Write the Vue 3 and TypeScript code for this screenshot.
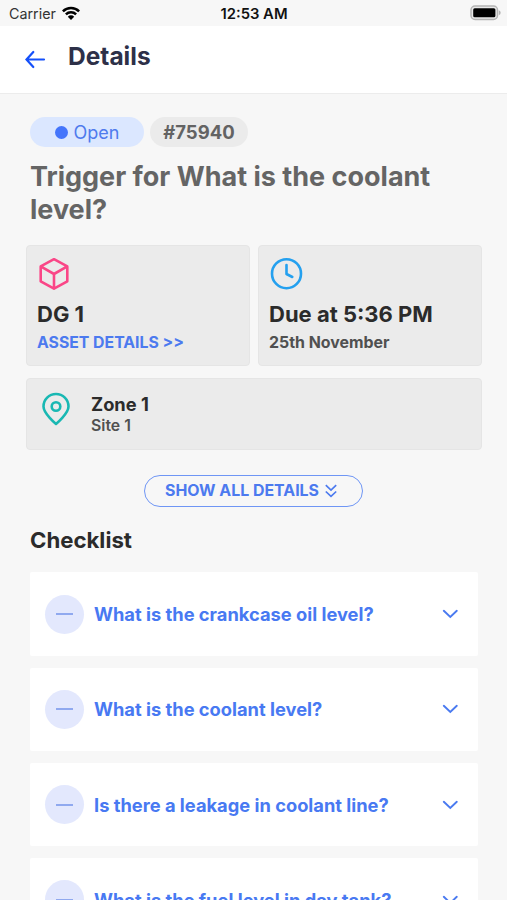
<script setup lang="ts">
interface ChecklistItem {
  id: number
  question: string
}

const ticket = {
  status: 'Open',
  number: '#75940',
  title: 'Trigger for What is the coolant level?',
  asset: 'DG 1',
  due: 'Due at 5:36 PM',
  date: '25th November',
  zone: 'Zone 1',
  site: 'Site 1',
}

const checklist: ChecklistItem[] = [
  { id: 1, question: 'What is the crankcase oil level?' },
  { id: 2, question: 'What is the coolant level?' },
  { id: 3, question: 'Is there a leakage in coolant line?' },
  { id: 4, question: 'What is the fuel level in day tank?' },
]
</script>

<template>
  <div class="screen">
    <div class="status-bar">
      <div class="carrier">
        <span class="carrier-name">Carrier</span>
        <svg class="wifi" viewBox="0 0 18 14" width="18" height="14">
          <g fill="none" stroke="#000" stroke-width="2.5">
            <path d="M0.9 5.3A11.4 11.4 0 0 1 17.1 5.3" />
            <path d="M3.9 8.4A7.2 7.2 0 0 1 14.1 8.4" />
          </g>
          <path d="M9 14L5.8 10.7A4.5 4.5 0 0 1 12.2 10.7Z" />
        </svg>
      </div>
      <span class="time">12:53 AM</span>
      <svg class="battery" viewBox="0 0 32 16" width="32" height="16">
        <rect x="2" y="1" width="26.500" height="13.400" rx="4" fill="#e8e8e8" stroke="#b4b4b4" stroke-width="1.5" />
        <rect x="4.2" y="3.3" width="22.2" height="8.900" rx="1.500" />
        <path d="M29.8 5.2Q31.7 6 31.7 7.7T29.8 10.2Z" fill="#b4b4b4" />
      </svg>
    </div>

    <header class="header">
      <svg class="back" viewBox="0 0 22 20" width="22" height="20">
        <path d="M20 9.500H2.800M9.300 2L2.500 9.500L9.300 17" />
      </svg>
      <h1>Details</h1>
    </header>

    <main class="content">
      <div class="tags">
        <span class="tag open"><i class="dot"></i>{{ ticket.status }}</span>
        <span class="tag number">{{ ticket.number }}</span>
      </div>
      <h2 class="title">{{ ticket.title }}</h2>

      <div class="cards">
        <section class="card">
          <svg class="icon cube" viewBox="0 0 34 34" width="34" height="34">
            <path d="M17 2.2L30.3 9.4V24.3L17 31.7L3.7 24.3V9.4ZM3.7 9.4L17 17L30.3 9.4M17 17V31.7" />
          </svg>
          <strong class="card-title">{{ ticket.asset }}</strong>
          <span class="asset-link">ASSET DETAILS &gt;&gt;</span>
        </section>
        <section class="card">
          <svg class="icon clock" viewBox="0 0 34 34" width="34" height="34">
            <circle cx="17.500" cy="16.700" r="14.5" />
            <path d="M17.500 8V17L23.300 20" />
          </svg>
          <strong class="card-title">{{ ticket.due }}</strong>
          <span class="date">{{ ticket.date }}</span>
        </section>
        <section class="card zone">
          <svg class="icon pin" viewBox="0 0 34 34" width="34" height="34">
            <path d="M29.5 14.5C29.5 21.5 17 32 17 32S4.500 21.500 4.500 14.500A12.500 12.500 0 0 1 29.500 14.500Z" />
            <circle cx="17" cy="14.500" r="4.300" />
          </svg>
          <div class="zone-text">
            <strong class="zone-name">{{ ticket.zone }}</strong>
            <span class="site">{{ ticket.site }}</span>
          </div>
        </section>
      </div>

      <button class="show-all" type="button">
        <span>SHOW ALL DETAILS</span>
        <svg viewBox="0 0 12 14" width="12" height="14">
          <path d="M0.800 1.200L6 6L11.200 1.200M0.800 7.500L6 12.300L11.200 7.500" />
        </svg>
      </button>

      <h3 class="section-title">Checklist</h3>
      <ul class="checklist">
        <li v-for="item in checklist" :key="item.id" class="item">
          <span class="state"><i></i></span>
          <span class="question">{{ item.question }}</span>
          <svg class="chevron" viewBox="0 0 16 10" width="16" height="10">
            <path d="M1.800 1.800L8.300 8L14.800 1.800" />
          </svg>
        </li>
      </ul>
    </main>
  </div>
</template>

<style>
body {
  margin: 0;
  background: #f7f7f7;
}
</style>

<style scoped>
* {
  box-sizing: border-box;
}

.screen {
  width: 100%;
  height: 900px;
  overflow: hidden;
  background: #f7f7f7;
  font-family: Inter, 'Liberation Sans', sans-serif;
}

h1,
h2,
h3,
ul {
  margin: 0;
  padding: 0;
}

svg {
  display: block;
  flex: none;
}

.status-bar {
  display: grid;
  grid-template-columns: 1fr auto 1fr;
  align-items: center;
  height: 26px;
  padding: 2px 6px 0 9px;
  font-size: 14px;
  line-height: 20px;
  color: #111;
}

.carrier {
  display: flex;
  align-items: center;
  gap: 6px;
}

.carrier-name {
  color: #333;
  font-size: 14.3px;
}

.wifi {
  margin-top: -3px;
}

.time {
  position: relative;
  left: -1px;
  font-weight: 600;
  font-size: 14.8px;
}

.battery {
  justify-self: end;
  margin-top: -2px;
}

.header {
  display: flex;
  align-items: center;
  gap: 22px;
  height: 68px;
  padding: 0 24px;
  background: #fff;
  border-bottom: 1px solid #ececec;
}

.back {
  fill: none;
  stroke: #1550fa;
  stroke-width: 2.2;
  stroke-linecap: round;
}

.header h1 {
  padding-bottom: 7px;
  font-size: 24.5px;
  line-height: 30px;
  font-weight: 700;
  color: #2d3048;
}

.content {
  padding: 23px 25px 0 26px;
}

.tags {
  display: flex;
  gap: 6px;
  padding-left: 4px;
}

.tag {
  display: flex;
  align-items: center;
  justify-content: center;
  height: 30px;
  border-radius: 15px;
  font-size: 18px;
}

.open {
  width: 114px;
  gap: 6px;
  background: #dbe7ff;
  color: #4f7bed;
}

.dot {
  width: 13px;
  height: 13px;
  border-radius: 50%;
  background: #4475fb;
}

.number {
  width: 98px;
  background: #ebebeb;
  color: #636363;
  font-size: 18.5px;
  font-weight: 700;
}

.title {
  margin: 13px 0 0 4px;
  font-size: 27px;
  line-height: 33px;
  font-weight: 700;
  color: #656565;
}

.cards {
  display: grid;
  grid-template-columns: 1fr 1fr;
  gap: 12px 8px;
  margin-top: 19px;
}

.card {
  display: flex;
  flex-direction: column;
  align-items: flex-start;
  height: 121px;
  padding: 11px 10px;
  background: #ebebeb;
  border: 1px solid #e5e5e5;
  border-radius: 4px;
}

.icon {
  fill: none;
  stroke-width: 2.6;
  stroke-linejoin: round;
  stroke-linecap: round;
}

.cube {
  stroke: #fa4687;
}

.clock {
  stroke: #24a0ef;
}

.pin {
  stroke: #19b8b3;
}

.card-title {
  margin-top: 9px;
  font-size: 22px;
  line-height: 28px;
  font-weight: 700;
  color: #2b2b2b;
}

.asset-link,
.date {
  margin-top: 5px;
  font-size: 15.8px;
  line-height: 20px;
  font-weight: 700;
}

.asset-link {
  color: #4c7aef;
}

.date {
  color: #505050;
  font-size: 15.9px;
}

.zone {
  grid-column: 1 / -1;
  flex-direction: row;
  gap: 18px;
  height: 72px;
  padding: 13px 12px;
}

.zone-text {
  display: flex;
  flex-direction: column;
}

.zone-name {
  font-size: 18.3px;
  line-height: 24px;
  font-weight: 700;
  color: #2b2b2b;
}

.site {
  padding-top: 1px;
  font-size: 15.8px;
  line-height: 18px;
  font-weight: 600;
  color: #505050;
}

.show-all {
  display: flex;
  align-items: center;
  justify-content: center;
  gap: 6px;
  width: 219px;
  height: 32px;
  margin: 25px 0 0 118px;
  padding: 0 5px 0 0;
  background: transparent;
  border: 1.500px solid #6f96f5;
  border-radius: 16px;
  color: #4c7aef;
  font: 700 15.900px/20px Inter, sans-serif;
}

.show-all svg {
  fill: none;
  stroke: #4c7aef;
  stroke-width: 1.700;
}

.section-title {
  margin: 18px 0 0 4px;
  font-size: 22.200px;
  line-height: 30px;
  font-weight: 700;
  color: #2b2b2b;
}

.checklist {
  display: flex;
  flex-direction: column;
  gap: 12px;
  margin: 17.400px 4px 0;
  list-style: none;
}

.item {
  display: flex;
  align-items: center;
  height: 83.300px;
  padding: 0 20px 0 15px;
  background: #fff;
  border-radius: 2px;
}

.state {
  display: flex;
  align-items: center;
  justify-content: center;
  flex: none;
  width: 39px;
  height: 39px;
  border-radius: 50%;
  background: #e3e8fd;
}

.state i {
  width: 17px;
  height: 2px;
  background: #90a9ef;
}

.question {
  flex: 1;
  margin-left: 10px;
  font-size: 18.300px;
  line-height: 24px;
  font-weight: 700;
  color: #4879f2;
  white-space: nowrap;
}

.chevron {
  fill: none;
  stroke: #4a7af0;
  stroke-width: 1.900;
  stroke-linecap: round;
}
</style>
